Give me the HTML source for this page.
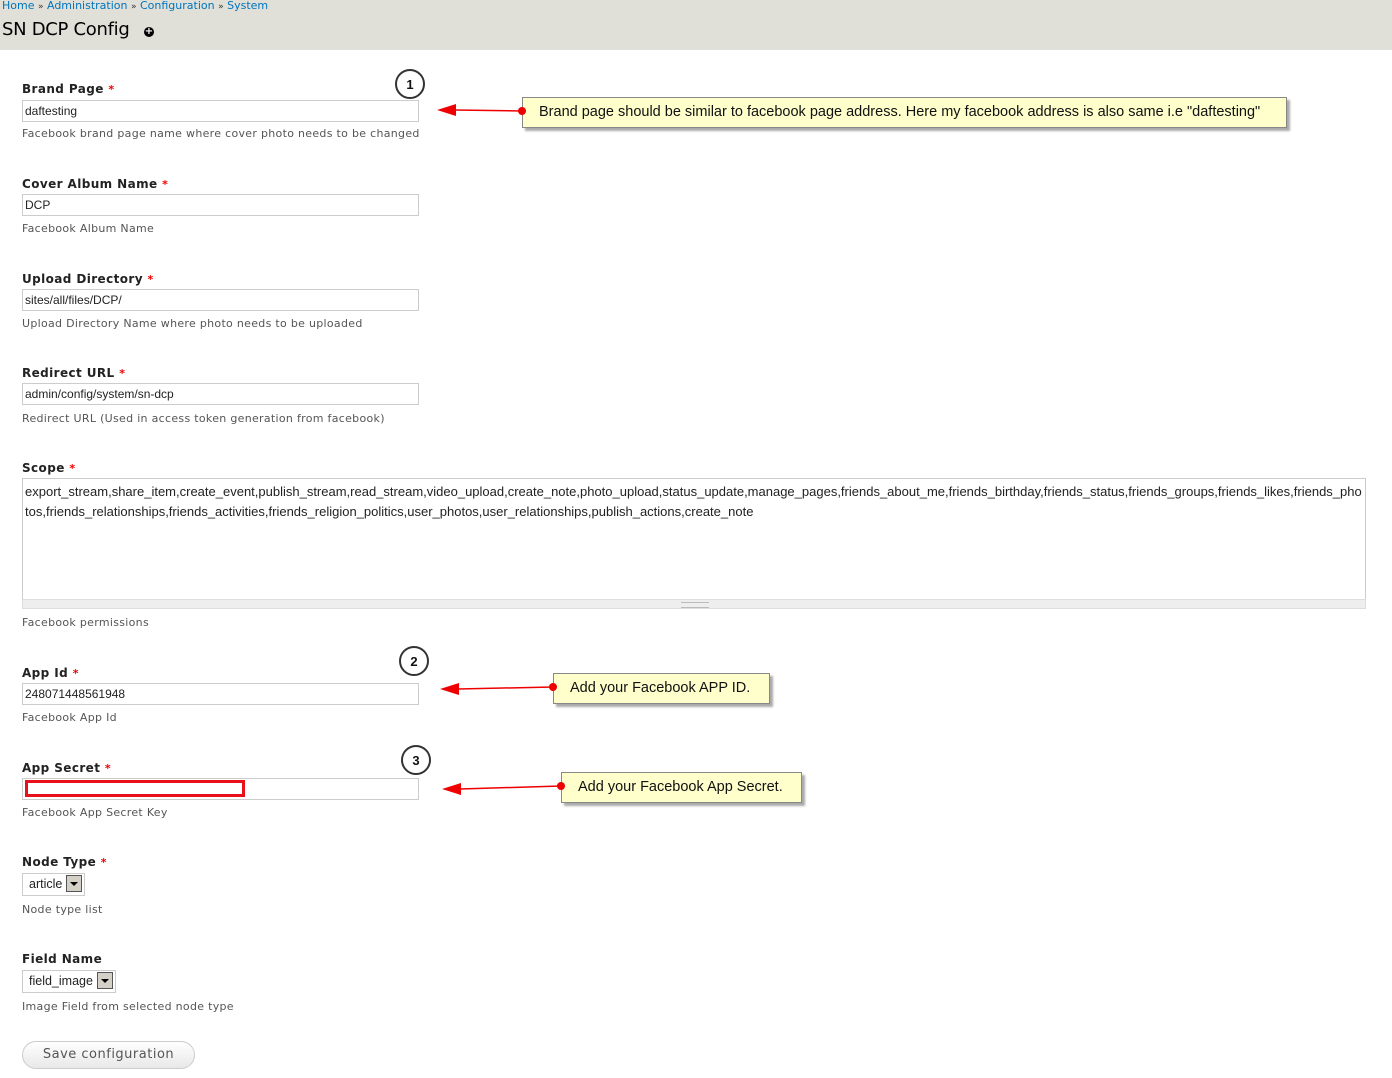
<!DOCTYPE html>
<html><head><meta charset="utf-8"><style>
body{margin:0;width:1392px;height:1078px;background:#fff;position:relative;overflow:hidden;font-family:"DejaVu Sans","Liberation Sans",sans-serif;}
.hdr{position:absolute;left:0;top:0;width:1392px;height:50px;background:#e0e0d8;}
.bc{position:absolute;left:2px;top:-1px;font-size:11px;color:#0074bd;white-space:nowrap;}
.bc span{color:#333;font-size:9px;}
.title{position:absolute;left:2px;top:19px;font-size:18px;color:#000;white-space:nowrap;letter-spacing:-0.3px;}
.plus{position:absolute;left:144px;top:27px;width:10px;height:10px;border-radius:50%;background:#000;color:#fff;font-size:10px;line-height:10px;text-align:center;font-weight:bold;}
.lab{position:absolute;left:22px;font-size:12px;font-weight:bold;color:#222;letter-spacing:0.4px;white-space:nowrap;}
.lab b{color:#e00;font-size:11px;}
.inp{position:absolute;left:22px;height:20px;border:1px solid #ccc;box-sizing:content-box;font-family:"Liberation Sans",sans-serif;font-size:12px;line-height:20px;padding-left:2px;width:393px;color:#222;white-space:nowrap;}
.desc{position:absolute;left:22px;font-size:11px;color:#555;letter-spacing:0.3px;white-space:nowrap;}
.ta{position:absolute;left:22px;top:478px;width:1344px;height:122px;border:1px solid #ccc;font-family:"Liberation Sans",sans-serif;font-size:13px;line-height:20px;padding:3px 2px;box-sizing:border-box;color:#222;word-break:break-all;}
.grip{position:absolute;left:22px;top:599px;width:1344px;height:10px;background:#eee;border:1px solid #ddd;box-sizing:border-box;}
.sel{position:absolute;left:22px;height:21px;border:1px solid #ccc;font-family:"Liberation Sans",sans-serif;font-size:12.5px;line-height:21px;padding-left:6px;color:#222;}
.sel i{display:inline-block;width:14px;height:15px;background:#d4d0c8;border:1px solid #555;vertical-align:middle;margin:0 2px 0 4px;position:relative;top:-1px;}
.sel i:after{content:"";position:absolute;left:3px;top:6px;border-left:4px solid transparent;border-right:4px solid transparent;border-top:4px solid #000;}
.btn{position:absolute;left:22px;top:1041px;width:171px;height:26px;border:1px solid #ccc;border-radius:14px;background:linear-gradient(#fff,#e8e8e8);font-size:13px;color:#555;text-align:center;line-height:26px;letter-spacing:0.5px;}
.call{position:absolute;background:#ffffcc;border:1px solid #888;box-shadow:3px 3px 2px #aaa;font-family:"Liberation Sans",sans-serif;font-size:14.5px;color:#111;line-height:29px;white-space:nowrap;box-sizing:border-box;}
</style></head><body>
<div class="hdr">
<div class="bc">Home <span>»</span> Administration <span>»</span> Configuration <span>»</span> System</div>
<div class="title">SN DCP Config</div><div class="plus">+</div>
</div>

<div class="lab" style="top:82px">Brand Page <b>*</b></div>
<div class="inp" style="top:100px">daftesting</div>
<div class="desc" style="top:127px">Facebook brand page name where cover photo needs to be changed</div>

<div class="lab" style="top:177px">Cover Album Name <b>*</b></div>
<div class="inp" style="top:194px">DCP</div>
<div class="desc" style="top:222px">Facebook Album Name</div>

<div class="lab" style="top:272px">Upload Directory <b>*</b></div>
<div class="inp" style="top:289px">sites/all/files/DCP/</div>
<div class="desc" style="top:317px">Upload Directory Name where photo needs to be uploaded</div>

<div class="lab" style="top:366px">Redirect URL <b>*</b></div>
<div class="inp" style="top:383px">admin/config/system/sn-dcp</div>
<div class="desc" style="top:412px">Redirect URL (Used in access token generation from facebook)</div>

<div class="lab" style="top:461px">Scope <b>*</b></div>
<div class="ta">export_stream,share_item,create_event,publish_stream,read_stream,video_upload,create_note,photo_upload,status_update,manage_pages,friends_about_me,friends_birthday,friends_status,friends_groups,friends_likes,friends_photos,friends_relationships,friends_activities,friends_religion_politics,user_photos,user_relationships,publish_actions,create_note</div>
<div class="grip"><div style="position:absolute;left:658px;top:2px;width:28px;height:4px;border-top:1px solid #bbb;border-bottom:1px solid #bbb"></div></div>
<div class="desc" style="top:616px">Facebook permissions</div>

<div class="lab" style="top:666px">App Id <b>*</b></div>
<div class="inp" style="top:683px">248071448561948</div>
<div class="desc" style="top:711px">Facebook App Id</div>

<div class="lab" style="top:761px">App Secret <b>*</b></div>
<div class="inp" style="top:778px"></div>
<div style="position:absolute;left:25px;top:780px;width:220px;height:17px;border:3px solid #e8101a;box-sizing:border-box"></div>
<div class="desc" style="top:806px">Facebook App Secret Key</div>

<div class="lab" style="top:855px">Node Type <b>*</b></div>
<div class="sel" style="top:873px">article<i></i></div>
<div class="desc" style="top:903px">Node type list</div>

<div class="lab" style="top:952px">Field Name</div>
<div class="sel" style="top:970px">field_image<i></i></div>
<div class="desc" style="top:1000px">Image Field from selected node type</div>

<div class="btn">Save configuration</div>

<div class="call" style="left:522px;top:97px;width:765px;height:31px;padding-left:16px">Brand page should be similar to facebook page address. Here my facebook address is also same i.e "daftesting"</div>
<div class="call" style="left:553px;top:673px;width:217px;height:31px;padding-left:16px">Add your Facebook APP ID.</div>
<div class="call" style="left:561px;top:772px;width:241px;height:31px;padding-left:16px">Add your Facebook App Secret.</div>

<svg width="1392" height="1078" style="position:absolute;left:0;top:0" font-family="Liberation Sans,sans-serif">
<g fill="none" stroke="#333" stroke-width="2">
<circle cx="410" cy="84" r="14" fill="#fff"/>
<circle cx="414" cy="661" r="14" fill="#fff"/>
<circle cx="416" cy="760" r="14" fill="#fff"/>
</g>
<g font-size="13" font-weight="bold" text-anchor="middle" fill="#111">
<text x="410" y="89">1</text><text x="414" y="666">2</text><text x="416" y="765">3</text>
</g>
<g stroke="#e00" stroke-width="1.5">
<line x1="455" y1="110" x2="522" y2="111"/>
<line x1="458" y1="689" x2="553" y2="687"/>
<line x1="460" y1="789" x2="561" y2="786"/>
</g>
<g fill="#e00">
<polygon points="437,110 456,104 456,116"/>
<polygon points="440,689 459,683 459,695"/>
<polygon points="442,789 461,783 461,795"/>
<circle cx="522" cy="111" r="4"/><circle cx="553" cy="687" r="4"/><circle cx="561" cy="786" r="4"/>
</g>
</svg>
</body></html>
